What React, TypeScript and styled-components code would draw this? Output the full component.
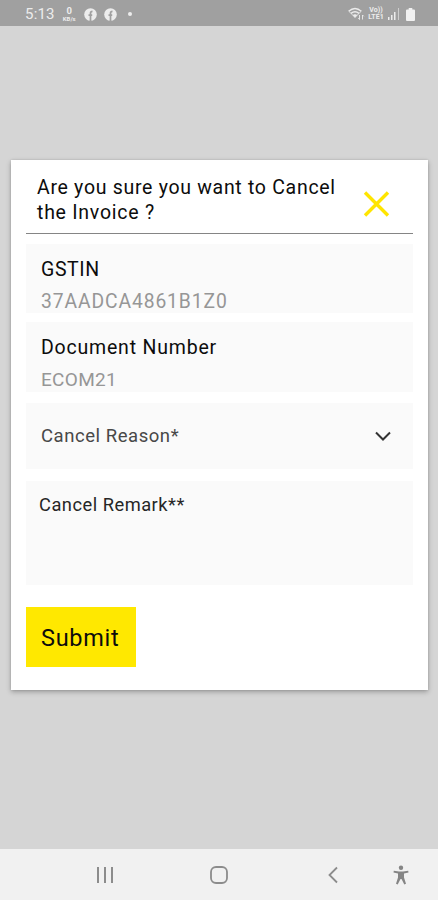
import React from "react";
import styled, { createGlobalStyle } from "styled-components";

const GlobalStyle = createGlobalStyle`
  * { box-sizing: border-box; }
  body { margin: 0; background: #d5d5d5; font-family: Roboto, "Liberation Sans", sans-serif; }
`;

const Screen = styled.div`
  display: flex;
  flex-direction: column;
  width: 438px;
  height: 900px;
  background: #d5d5d5;
  overflow: hidden;
`;

const StatusBar = styled.header`
  display: flex;
  align-items: center;
  justify-content: space-between;
  height: 26px;
  padding: 2px 23px 0 25px;
  background: #a0a0a0;
  color: #ececec;
`;

const StatusGroup = styled.div<{ $gap: number }>`
  display: flex;
  align-items: center;
  gap: ${(p) => p.$gap}px;
  svg { display: block; }
`;

const Clock = styled.span`
  font-size: 15px;
  line-height: 18px;
  letter-spacing: 0.2px;
`;

const TinyStack = styled.span<{ $top: number; $bottom: number; $width: number }>`
  display: flex;
  flex-direction: column;
  align-items: center;
  width: ${(p) => p.$width}px;
  font-weight: 700;
  span:first-child { font-size: ${(p) => p.$top}px; line-height: ${(p) => p.$top}px; }
  span:last-child { font-size: ${(p) => p.$bottom}px; line-height: ${(p) => p.$bottom}px; }
`;

const Dot = styled.span`
  width: 4px;
  height: 4px;
  margin-left: 4px;
  border-radius: 50%;
  background: #ececec;
`;

const Stage = styled.main`
  flex: 1;
  padding: 134px 10px 0 11px;
`;

const Dialog = styled.section`
  display: flex;
  flex-direction: column;
  height: 530px;
  padding: 0 15px;
  background: #fff;
  box-shadow: 0 2px 5px rgba(0, 0, 0, 0.28), 0 0 2px rgba(0, 0, 0, 0.12);
`;

const DialogHeader = styled.div`
  display: flex;
  justify-content: space-between;
  height: 74px;
  padding: 15px 21px 0 11px;
  border-bottom: 1.5px solid #858585;
`;

const Text = styled.span<{ $size?: number; $spacing: number; $color?: string; $weight?: number; $line?: number }>`
  display: block;
  white-space: nowrap;
  font-size: ${(p) => p.$size ?? 19.5}px;
  line-height: ${(p) => p.$line ?? 25}px;
  letter-spacing: ${(p) => p.$spacing}px;
  font-weight: ${(p) => p.$weight ?? 400};
  color: ${(p) => p.$color ?? "#0c0c0c"};
`;

const Title = styled.h1`
  margin: 0;
`;

const IconButton = styled.button`
  align-self: flex-start;
  margin-top: 14px;
  padding: 0;
  border: 0;
  background: none;
  svg { display: block; }
`;

const Field = styled.div<{ $height: number; $gap: number; $pad: string }>`
  height: ${(p) => p.$height}px;
  margin-top: ${(p) => p.$gap}px;
  padding: ${(p) => p.$pad};
  background: #fafafa;
`;

const SelectField = styled(Field)`
  display: flex;
  align-items: center;
  justify-content: space-between;
`;

const Value = styled(Text)`
  margin-top: 7px;
`;

const Submit = styled.button`
  align-self: flex-start;
  width: 110px;
  height: 60px;
  margin-top: 22px;
  padding: 1px 0 0 15px;
  border: 0;
  background: #ffe800;
  font-family: inherit;
  text-align: left;
`;

const NavBar = styled.nav`
  display: grid;
  grid-template-columns: 114px 114px 72px 40px;
  justify-content: start;
  align-items: center;
  justify-items: center;
  height: 51px;
  padding-left: 48px;
  background: #f1f1f1;
  svg { display: block; }
`;

const AccessibilitySlot = styled.span`
  margin-left: 66px;
`;

const BackSlot = styled.span`
  margin-left: 42px;
`;

const FacebookIcon = () => (
  <svg width="13" height="13" viewBox="0 0 13 13">
    <circle cx="6.5" cy="6.5" r="6.3" fill="#ececec" />
    <path d="M6.5 13V5.200c0-1.200.6-1.900 2-1.900M4.500 7.200h3.700" fill="none" stroke="#a0a0a0" strokeWidth="1.7" />
  </svg>
);

const WifiIcon = () => (
  <svg width="17" height="14" viewBox="0 0 17 14" fill="none" stroke="#ececec">
    <path d="M.7 4.200Q7 -1.200 13.300 4.200M3 6.400Q7 3.200 11 6.400" strokeWidth="1.4" />
    <path d="M.7 4.200 7 10.300l6.300-6.100" strokeWidth=".8" />
    <path d="m5 8.200 2 2.200 2-2.200Q7 6.800 5 8.200Z" fill="#ececec" strokeWidth=".6" />
    <path d="M11.500 8v4.500m-1.300-1.300 1.300 1.300M14.500 12.500V8m1.300 1.300L14.500 8" strokeWidth=".9" />
  </svg>
);

const SignalIcon = () => (
  <svg width="13" height="12" viewBox="0 0 13 12" fill="#ececec">
    <path d="M1 9h1.500v3H1zM4 7h1.500v5H4zM7 4h1.500v8H7z" />
    <path d="M11 0h1v12h-1z" opacity=".6" />
  </svg>
);

const BatterySlot = styled.span`
  margin-left: 3px;
`;

const BatteryIcon = () => (
  <svg width="9" height="13" viewBox="0 0 9 13" fill="#f1f1f1">
    <path d="M2.700 0h3.600v1.500H8q1 0 1 1V12q0 1-1 1H1q-1 0-1-1V2.500q0-1 1-1h1.700z" />
  </svg>
);

export default function App() {
  return (
    <>
      <GlobalStyle />
      <Screen>
        <StatusBar>
          <StatusGroup $gap={7}>
            <Clock>5:13</Clock>
            <TinyStack $top={9.5} $bottom={6} $width={15}>
              <span>0</span>
              <span>KB/s</span>
            </TinyStack>
            <FacebookIcon />
            <FacebookIcon />
            <Dot />
          </StatusGroup>
          <StatusGroup $gap={3}>
            <WifiIcon />
            <TinyStack $top={7} $bottom={7} $width={16}>
              <span>Vo))</span>
              <span>LTE1</span>
            </TinyStack>
            <SignalIcon />
            <BatterySlot>
              <BatteryIcon />
            </BatterySlot>
          </StatusGroup>
        </StatusBar>
        <Stage>
          <Dialog role="dialog">
            <DialogHeader>
              <Title>
                <Text $spacing={0.7}>Are you sure you want to Cancel</Text>
                <Text $spacing={0.75}>the Invoice ?</Text>
              </Title>
              <IconButton aria-label="Close">
                <svg width="30" height="30" viewBox="0 0 30 30">
                  <path d="m3 3.500 23 23m0-23-23 23" stroke="#ffe500" strokeWidth="3.4" />
                </svg>
              </IconButton>
            </DialogHeader>
            <Field $height={69} $gap={10} $pad="13px 15px 0">
              <Text $spacing={0.6} $weight={450}>GSTIN</Text>
              <Value $spacing={0.9} $size={19.3} $color="#969696">37AADCA4861B1Z0</Value>
            </Field>
            <Field $height={70} $gap={9} $pad="13px 15px 0">
              <Text $spacing={0.8} $weight={450}>Document Number</Text>
              <Value $spacing={0.3} $size={19} $color="#969696">ECOM21</Value>
            </Field>
            <SelectField $height={66} $gap={11} $pad="0 22px 0 15px">
              <Text $spacing={0.55} $size={18.5} $color="#484848">Cancel Reason*</Text>
              <svg width="16" height="10" viewBox="0 0 16 10" fill="none">
                <path d="m1 1.500 7 7 7-7" stroke="#333" strokeWidth="2" />
              </svg>
            </SelectField>
            <Field $height={104} $gap={12} $pad="11px 13px">
              <Text $spacing={0.5} $size={18.3} $color="#262626">Cancel Remark**</Text>
            </Field>
            <Submit>
              <Text $size={23.5} $spacing={0.7} $line={28}>Submit</Text>
            </Submit>
          </Dialog>
        </Stage>
        <NavBar>
          <svg width="18" height="18" viewBox="0 0 18 18">
            <path d="M2 1v16M9 1v16M16 1v16" stroke="#8c8c8c" strokeWidth="2" />
          </svg>
          <svg width="18" height="18" viewBox="0 0 18 18" fill="none">
            <rect x="1" y="1" width="16" height="16" rx="5" stroke="#8c8c8c" strokeWidth="1.8" />
          </svg>
          <BackSlot>
            <svg width="10" height="18" viewBox="0 0 10 18" fill="none">
              <path d="M9 1.500 1.500 9 9 16.500" stroke="#8c8c8c" strokeWidth="1.8" />
            </svg>
          </BackSlot>
          <AccessibilitySlot>
            <svg width="16" height="20" viewBox="0 0 16 20" fill="#858585">
              <circle cx="8" cy="2.700" r="2.200" />
              <path d="M.8 5.800 6 6.600h4l5.200-.8.300 1.600-4.500 1.200v3.900l2 6.300-1.700.7L8.500 14h-1l-2.800 5.500-1.700-.7 2-6.300V8.600L.5 7.400z" />
            </svg>
          </AccessibilitySlot>
        </NavBar>
      </Screen>
    </>
  );
}
